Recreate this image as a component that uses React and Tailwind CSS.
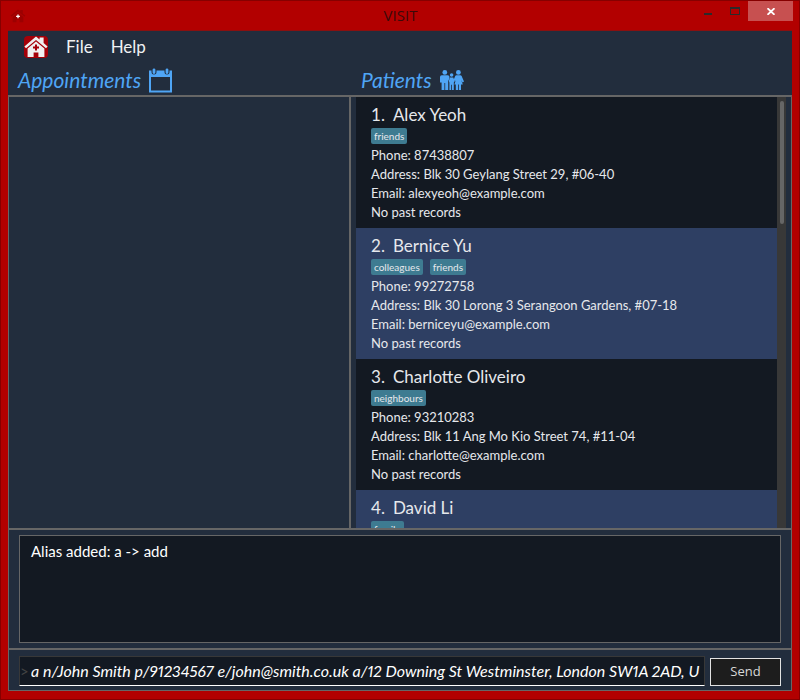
const patients = [
  { name: 'Alex Yeoh', tags: ['friends'], phone: '87438807', address: 'Blk 30 Geylang Street 29, #06-40', email: 'alexyeoh@example.com' },
  { name: 'Bernice Yu', tags: ['colleagues', 'friends'], phone: '99272758', address: 'Blk 30 Lorong 3 Serangoon Gardens, #07-18', email: 'berniceyu@example.com' },
  { name: 'Charlotte Oliveiro', tags: ['neighbours'], phone: '93210283', address: 'Blk 11 Ang Mo Kio Street 74, #11-04', email: 'charlotte@example.com' },
  { name: 'David Li', tags: ['family'] },
];

function HouseIcon({ className, house, cross }) {
  return (
    <svg viewBox="0 0 24 22" className={className} aria-hidden="true">
      <path fill={house} d="M12 0.6 L15.6 3.6 V1.6 H19.6 V7 L23.6 10.4 L22 12.2 L12 3.9 L2 12.2 L0.4 10.4 Z" />
      <path fill={house} fillRule="evenodd" d="M12 5.4 L20.4 12.4 V21 H14.4 V16.4 H9.6 V21 H3.6 V12.4 Z" />
      <path fill={cross} d="M11 8.6 h2 v2 h2 v2 h-2 v2 h-2 v-2 h-2 v-2 h2 Z" />
    </svg>
  );
}

function CalendarIcon() {
  return (
    <svg viewBox="0 0 23 25" className="h-[25px] w-[23px]" aria-hidden="true">
      <path fill="#4fa5f5" fillRule="evenodd" d="M0 2.5 H23 V24.5 H0 Z M2 9 V22.5 H21 V9 Z" />
      <path stroke="#222d3d" strokeWidth="5" strokeLinecap="round" d="M5 2.5 V4 M18 2.5 V4" />
      <path stroke="#4fa5f5" strokeWidth="2.8" strokeLinecap="round" d="M5 1.8 V4.6 M18 1.8 V4.6" />
    </svg>
  );
}

function FamilyIcon() {
  return (
    <svg viewBox="0 0 24 20" className="h-5 w-6" fill="#4fa5f5" aria-hidden="true">
      <circle cx="4.8" cy="2.4" r="2.4" />
      <path d="M1.8 5.2 H7.8 Q9.4 5.2 9.4 6.8 V8.6 L8.2 11 V20 H5.2 V13 H4.4 V20 H1.6 V12.4 H0 V7 Q0 5.2 1.8 5.2 Z" />
      <circle cx="11.6" cy="5" r="1.8" />
      <path d="M10 7.6 H13.2 L14.8 11 L13.8 12.4 V20 H12 V14.8 H11.2 V20 H9.4 V12.4 L8.8 11 Z" />
      <circle cx="18.4" cy="2.4" r="2.4" />
      <path d="M16.4 5.2 H20.4 Q21.2 5.2 21.6 6 L24 11.4 L22.6 12.4 L21.2 10 L22.8 14.4 H21 V20 H18.8 V14.6 H18 V20 H15.8 V14.4 H14.4 L15.8 10 L15 11.4 L13.8 9.6 L15.2 6 Q15.6 5.2 16.4 5.2 Z" />
    </svg>
  );
}

function PatientCard({ patient, index }) {
  return (
    <li className="h-[131px] px-[15px] pt-1 text-[13px] leading-[19px] text-[#e6e8ec] odd:bg-[#131922] even:bg-[#2e3f63]">
      <h3 className="flex h-[27px] items-center gap-2 text-[17px]">
        <span>{index + 1}.</span>
        <span>{patient.name}</span>
      </h3>
      <div className="mb-0.5 flex h-4 gap-[7px]">
        {patient.tags.map((tag) => (
          <span key={tag} className="rounded-xs bg-[#3e7b91] px-[3px] text-[10px] leading-4">{tag}</span>
        ))}
      </div>
      {patient.phone && (
        <>
          <p>Phone: {patient.phone}</p>
          <p>Address: {patient.address}</p>
          <p>Email: {patient.email}</p>
          <p>No past records</p>
        </>
      )}
    </li>
  );
}

function WindowControls() {
  return (
    <div className="flex h-full items-start">
      <button aria-label="Minimize" className="flex h-[22px] w-[27px] items-center justify-center">
        <svg viewBox="0 0 12 12" className="size-3" aria-hidden="true"><path fill="#2b2b2b" d="M2 7 h8 v2 h-8 Z" /></svg>
      </button>
      <button aria-label="Maximize" className="flex h-5 w-[27px] items-center justify-center">
        <svg viewBox="0 0 10 8" className="h-2 w-2.5" shapeRendering="crispEdges" aria-hidden="true"><path fill="#2b2b2b" fillRule="evenodd" d="M0 0 H10 V8 H0 Z M1 2 V7 H9 V2 Z" /></svg>
      </button>
      <button aria-label="Close" className="flex h-5 w-[45px] items-center justify-center bg-[#c75050]">
        <svg viewBox="0 0 8 7" className="h-[7px] w-2" aria-hidden="true"><path stroke="#fff" strokeWidth="1.8" d="M0.5 0.2 L7.5 6.8 M7.5 0.2 L0.5 6.8" /></svg>
      </button>
    </div>
  );
}

export default function App() {
  return (
    <div className="flex h-screen flex-col border border-[#860000] bg-[#b20000] pr-1.5 pb-2 pl-[7px] font-['Lato',sans-serif]">
      <header className="grid h-[29px] shrink-0 grid-cols-[1fr_auto_1fr] items-center">
        <HouseIcon className="ml-[2px] h-[14px] w-4" house="#9c0000" cross="#ffffff" />
        <h1 className="font-['Open_Sans',sans-serif] text-[15px] text-[#3a0a0a]">VISIT</h1>
        <div className="flex h-full justify-end"><WindowControls /></div>
      </header>

      <div className="mr-px flex min-h-0 flex-1 flex-col border-t border-[#8a1010] bg-[#222d3d]">
        <nav className="flex h-8 shrink-0 items-center gap-[18px] pl-4 text-[17px] text-[#f0f1f3]">
          <span className="flex h-[22px] w-6 items-center justify-center rounded-sm bg-[#a50008]">
            <HouseIcon className="h-[22px] w-6" house="#f0f0f0" cross="#a50008" />
          </span>
          <button>File</button>
          <button>Help</button>
        </nav>

        <div className="grid h-8 shrink-0 grid-cols-[343fr_441fr] pt-0.5 text-[21px] leading-[30px] text-[#4fa5f5] italic">
          <h2 className="flex items-center gap-2 pl-2.5">Appointments <CalendarIcon /></h2>
          <h2 className="flex items-center gap-2 pl-2.5">Patients <FamilyIcon /></h2>
        </div>

        <div className="flex min-h-0 flex-1 flex-col border border-t-0 border-[#666]">
          <main className="grid min-h-0 flex-1 grid-cols-[342fr_440fr] border-y-2 border-[#666]">
            <section aria-label="Appointments" className="border-r-2 border-[#666]" />
            <section aria-label="Patients" className="flex min-h-0 px-[5px]">
              <ul className="min-w-0 flex-1 overflow-hidden">
                {patients.map((patient, index) => (
                  <PatientCard key={patient.name} patient={patient} index={index} />
                ))}
              </ul>
              <div className="w-[9px] bg-[#383838] px-[3px] pt-1">
                <div className="h-[123px] w-1 rounded-xs bg-[#666]" />
              </div>
            </section>
          </main>

          <div className="border-b-2 border-[#666] px-2.5 py-[5px]">
            <div className="h-[108px] border border-[#666] bg-[#131922] px-[11px] py-1.5 text-[15px] leading-[19px] text-white">
              Alias added: a -&gt; add
            </div>
          </div>

          <form className="flex items-end gap-[5px] px-2.5 pt-1.5 pb-1">
            <label className="flex h-[30px] min-w-0 flex-1 items-center border border-[#383838] border-b-white bg-[#131922] text-base text-white">
              <span className="w-[11px] shrink-0 text-[15px] text-[#444]">&gt;</span>
              <input
                aria-label="Command"
                className="min-w-0 flex-1 italic proportional-nums outline-none"
                defaultValue="a n/John Smith p/91234567 e/john@smith.co.uk a/12 Downing St Westminster, London SW1A 2AD, U"
              />
            </label>
            <button type="button" className="h-7 w-[71px] border border-[#e2e2e2] bg-[#1d1d1d] font-['Open_Sans',sans-serif] text-[13px] text-[#d8d8d8]">Send</button>
          </form>
        </div>
      </div>
    </div>
  );
}
